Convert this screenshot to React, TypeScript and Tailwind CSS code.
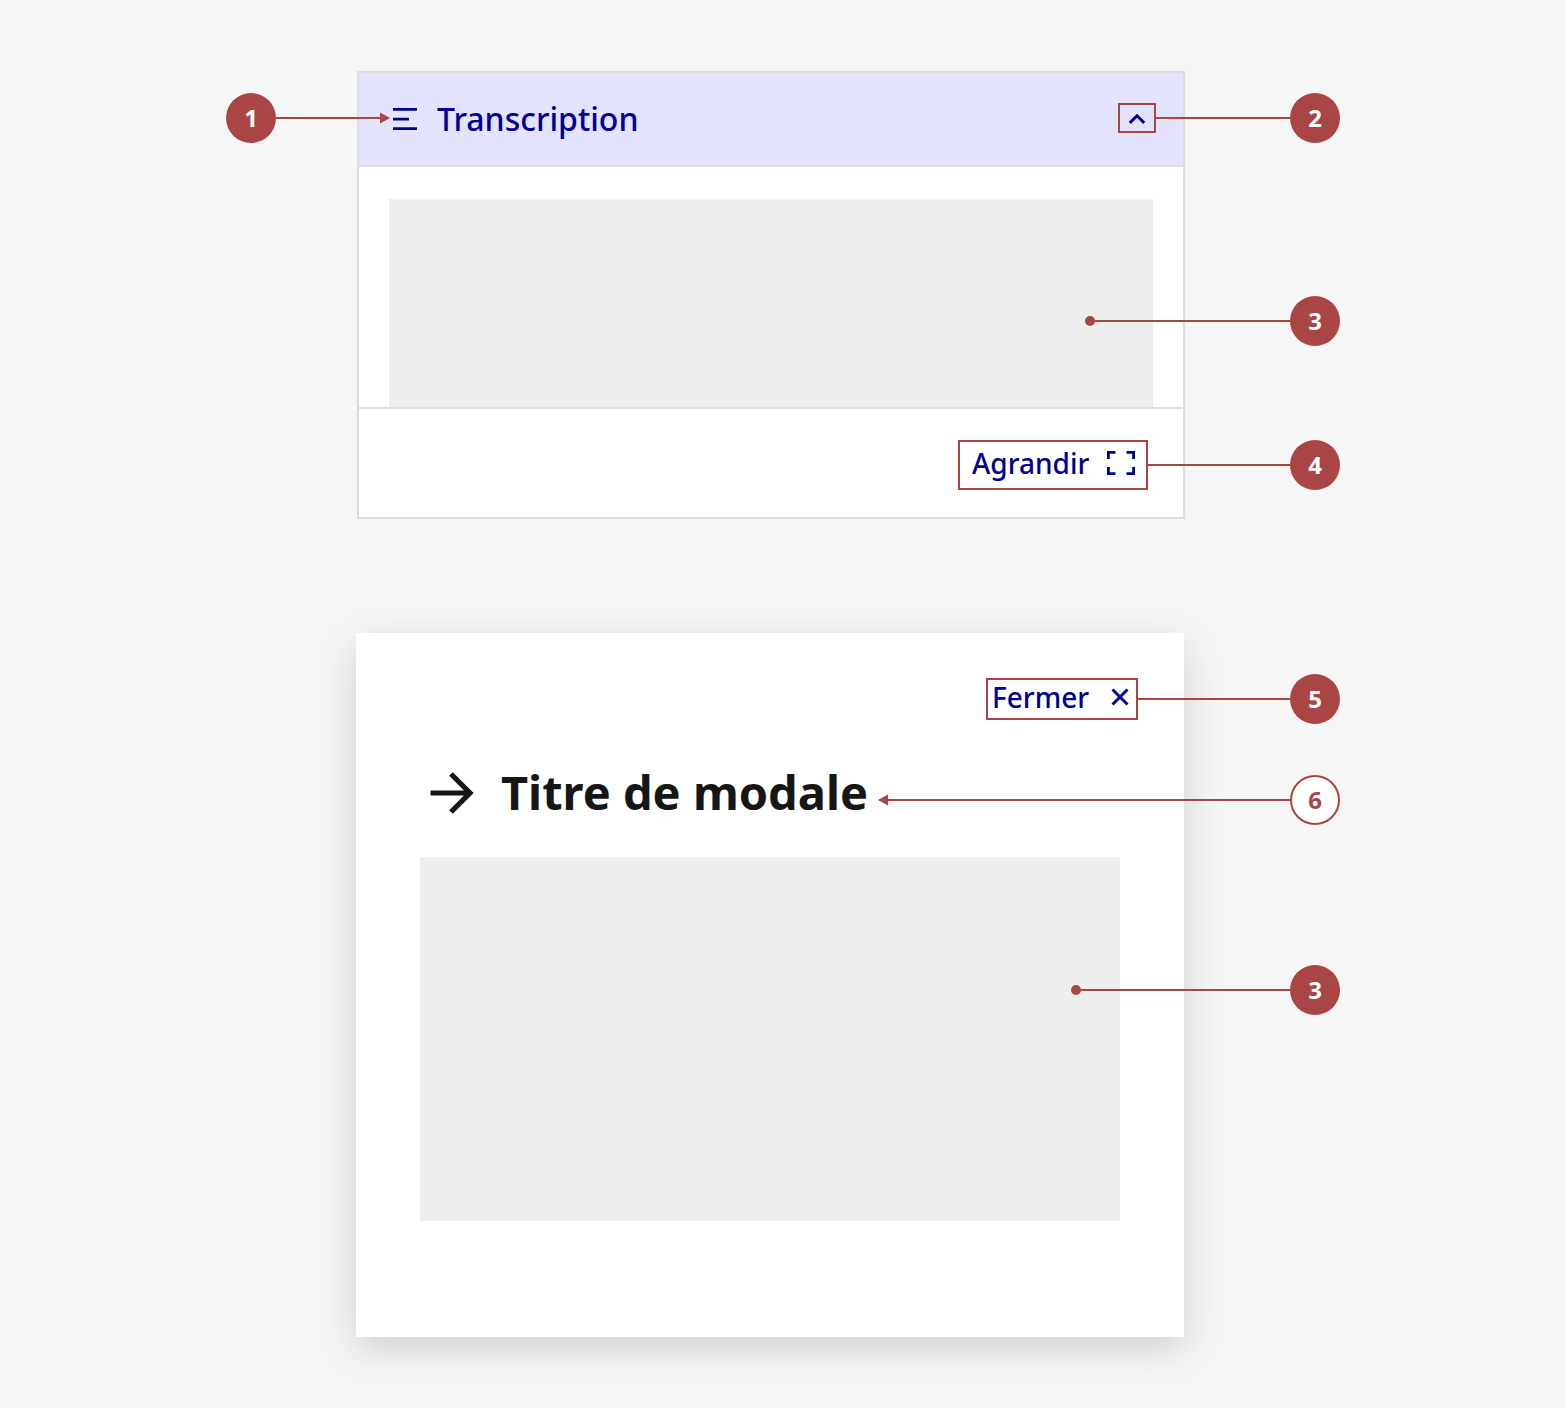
import type { ReactNode } from "react";

function Marker({ label, outlined = false }: { label: string; outlined?: boolean }) {
  const tone = outlined
    ? "border-2 border-[#a94645] bg-white text-[#a94645]"
    : "bg-[#a94645] text-white";
  return (
    <span
      className={`flex size-[50px] shrink-0 items-center justify-center rounded-full text-2xl leading-6 font-bold ${tone}`}
    >
      {label}
    </span>
  );
}

function Line() {
  return <span className="h-0.5 flex-1 bg-[#a94645]" />;
}

function Dot() {
  return <span className="size-[10px] shrink-0 rounded-full bg-[#a94645]" />;
}

function Arrowhead({ direction }: { direction: "left" | "right" }) {
  return (
    <svg viewBox="0 0 10 12" className="h-3 w-2.5 shrink-0" fill="#a94645" aria-hidden="true">
      <path d={direction === "left" ? "M10 0.5v11L0 6z" : "M0 0.5v11L10 6z"} />
    </svg>
  );
}

function Callout({ className, children }: { className: string; children: ReactNode }) {
  return (
    <span className={`pointer-events-none absolute flex h-[50px] items-center ${className}`}>
      {children}
    </span>
  );
}

function TranscriptionCard() {
  return (
    <section className="relative mr-[155px] ml-[131px] border-2 border-[#dddddd] bg-white">
      <header className="relative flex min-h-[94px] items-center border-b-2 border-[#dddddd] bg-[#e3e3fd] pr-[27px] pl-[34px] text-[#000091]">
        <svg viewBox="0 0 24 22" className="h-[22px] w-6 shrink-0" fill="currentColor" aria-hidden="true">
          <path d="M0 0h24v2.7H0zM0 9.7h16v2.7H0zM0 19.3h24V22H0z" />
        </svg>
        <h2 className="ml-5 flex-1 text-[32px] leading-[42px] font-medium">Transcription</h2>
        <button
          type="button"
          aria-label="Replier la transcription"
          className="relative mb-0.5 flex h-[30px] w-[38px] items-center justify-center border-2 border-[#a94645]"
        >
          <svg viewBox="0 0 18 12" className="h-3 w-[18px]" fill="none" stroke="currentColor" strokeWidth="2.9" aria-hidden="true">
            <path d="M1.8 10.9L9 3.7L16.2 10.9" />
          </svg>
        </button>
        <Callout className="top-5 -left-[133px] w-[164px]">
          <Marker label="1" />
          <Line />
          <Arrowhead direction="right" />
        </Callout>
        <Callout className="top-5 -right-[157px] w-[184px]">
          <Line />
          <Marker label="2" />
        </Callout>
      </header>
      <div className="relative px-[30px] pt-8">
        <div className="h-52 bg-[#eeeeee]" />
        <Callout className="top-[129px] -right-[157px] w-[255px]">
          <Dot />
          <Line />
          <Marker label="3" />
        </Callout>
      </div>
      <footer className="relative flex justify-end border-t-2 border-[#dddddd] pt-[31px] pr-[35px] pb-[27px]">
        <button
          type="button"
          className="flex h-[50px] w-[190px] items-center justify-between border-2 border-[#a94645] pr-[11px] pb-1 pl-3 text-[28px] leading-9 font-medium text-[#000091]"
        >
          Agrandir
          <svg viewBox="0 0 28 24" className="h-6 w-7" fill="none" stroke="currentColor" strokeWidth="2.8" aria-hidden="true">
            <path d="M8.5 1.4H1.4V8M19.5 1.4h7.1V8M1.4 16v6.6h7.1M26.6 16v6.6h-7.1" />
          </svg>
        </button>
        <Callout className="top-[31px] -right-[157px] w-[192px]">
          <Line />
          <Marker label="4" />
        </Callout>
      </footer>
    </section>
  );
}

function Modal() {
  return (
    <section className="relative mt-[114px] mr-[156px] ml-[130px] bg-white px-16 pt-[45px] pb-[116px] shadow-[0_12px_36px_rgba(0,0,18,0.16)]">
      <div className="-mr-[18px] flex justify-end">
        <button
          type="button"
          className="flex h-[42px] w-[152px] items-center justify-between border-2 border-[#a94645] pr-[7px] pb-1 pl-1 text-[28px] leading-9 font-medium text-[#000091]"
        >
          Fermer
          <svg viewBox="0 0 18 18" className="size-[18px]" fill="none" stroke="currentColor" strokeWidth="2.9" aria-hidden="true">
            <path d="M1.5 1.5l15 15M16.5 1.5l-15 15" />
          </svg>
        </button>
      </div>
      <div className="mt-10 flex h-16 items-center text-[#161616]">
        <svg viewBox="0 0 44 44" className="ml-2.5 size-11" fill="none" stroke="currentColor" strokeWidth="5.2" aria-hidden="true">
          <path d="M0.5 23H40M21 4L40 23L21 42" />
        </svg>
        <h2 className="ml-[27px] text-[47px] leading-[60px] font-bold">Titre de modale</h2>
      </div>
      <div className="mt-[33px] h-[364px] bg-[#eeeeee]" />
      <Callout className="top-[41px] -right-[156px] w-[202px]">
        <Line />
        <Marker label="5" />
      </Callout>
      <Callout className="top-[142px] -right-[156px] w-[462px]">
        <Arrowhead direction="left" />
        <Line />
        <Marker label="6" outlined />
      </Callout>
      <Callout className="top-[332px] -right-[156px] w-[269px]">
        <Dot />
        <Line />
        <Marker label="3" />
      </Callout>
    </section>
  );
}

export default function App() {
  return (
    <main className="min-h-screen bg-[#f6f6f6] pt-[71px] pb-[71px] font-['Noto_Sans',sans-serif]">
      <div className="mx-auto max-w-[1114px]">
        <TranscriptionCard />
        <Modal />
      </div>
    </main>
  );
}
